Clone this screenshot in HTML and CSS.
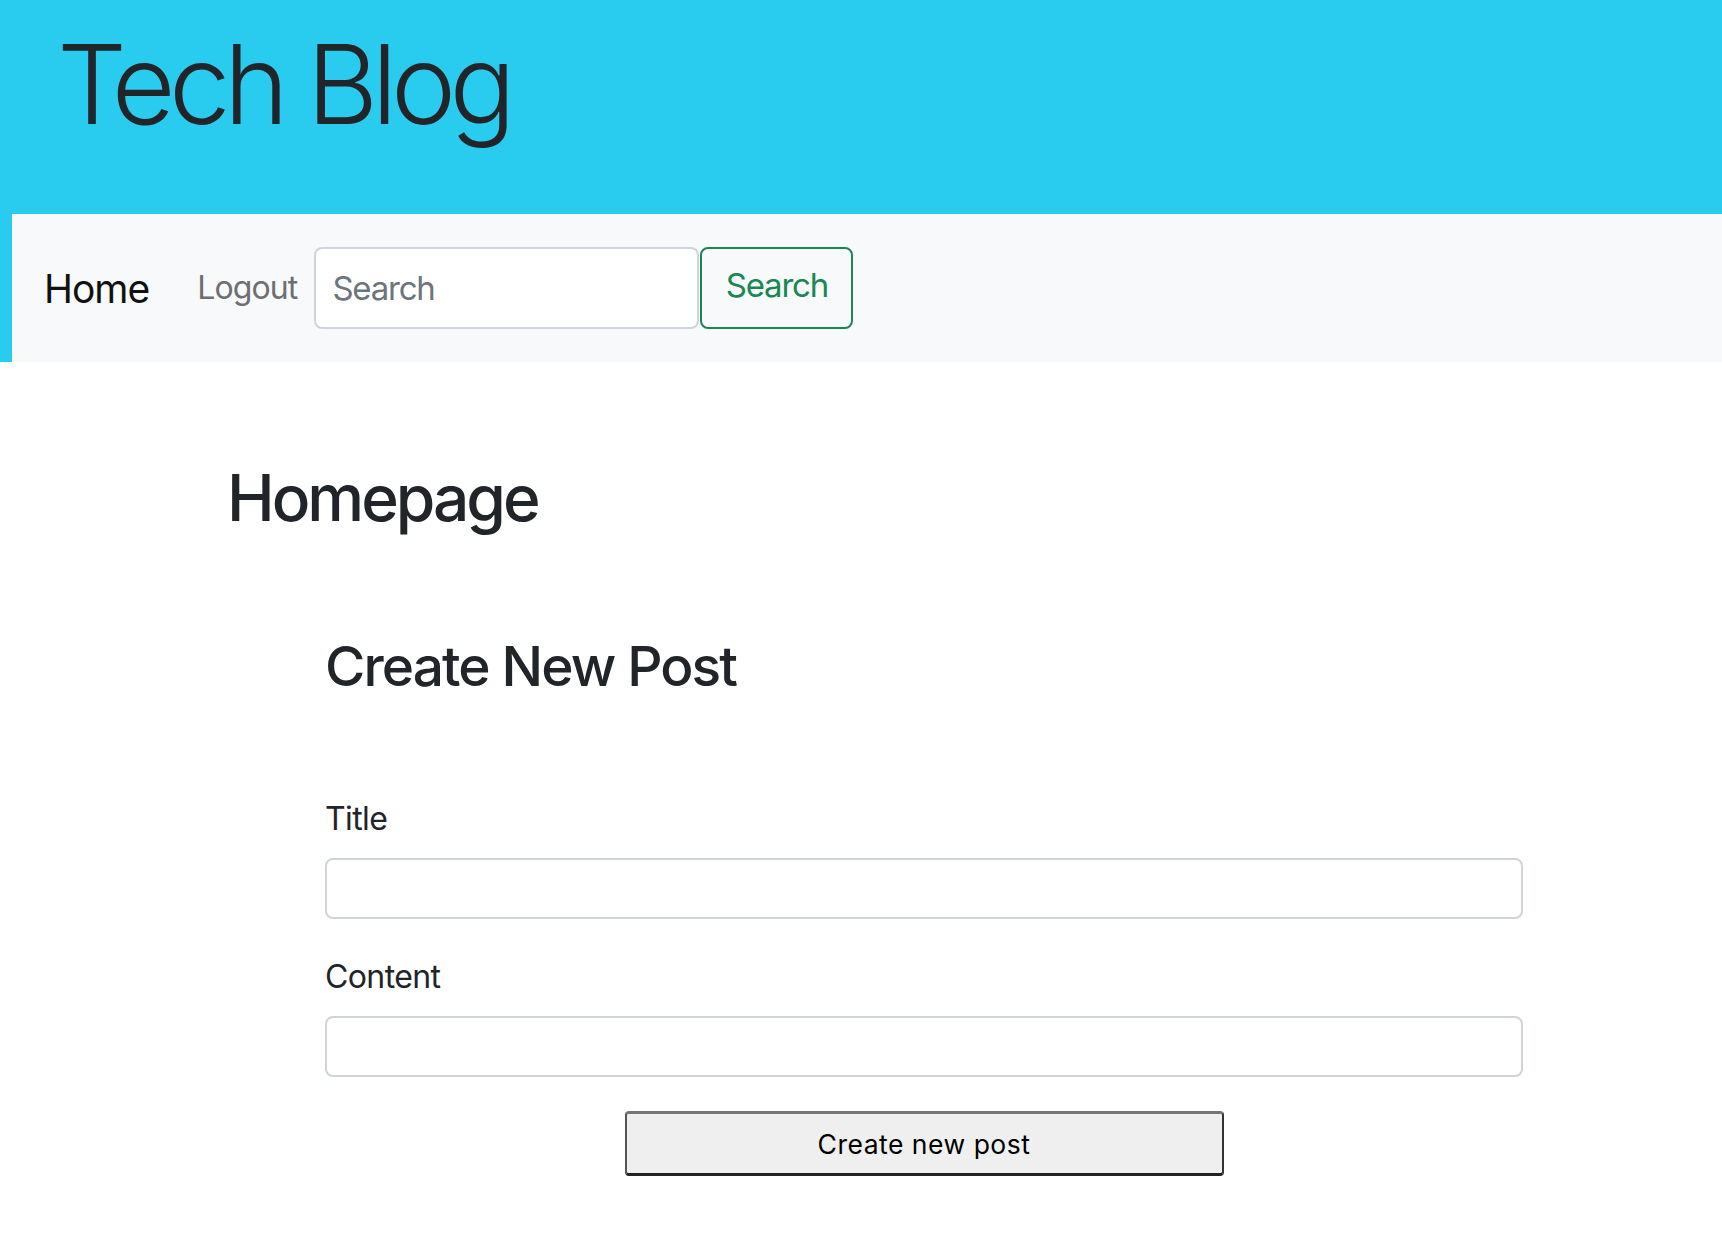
FILE: index.html
```html
<!DOCTYPE html>
<html lang="en">
<head>
<meta charset="utf-8">
<title>Tech Blog</title>
<link rel="stylesheet" href="styles.css">
</head>
<body>
<header class="site-header">
  <h1 class="brand-title">Tech Blog</h1>
  <nav class="navbar">
    <a class="nav-brand" href="#">Home</a>
    <a class="nav-link" href="#">Logout</a>
    <form class="search-form">
      <input class="search-input" type="search" placeholder="Search">
      <button class="search-btn" type="button">Search</button>
    </form>
  </nav>
</header>
<main class="main">
  <h1 class="page-title">Homepage</h1>
  <section class="post-form">
    <h2 class="form-title">Create New Post</h2>
    <label class="field-label" for="title">Title</label>
    <input class="field-input" id="title" type="text">
    <label class="field-label field-label-second" for="content">Content</label>
    <input class="field-input" id="content" type="text">
    <div class="submit-row">
      <button class="submit-btn" type="button">Create new post</button>
    </div>
  </section>
</main>
</body>
</html>
```

FILE: styles.css
```css
* { box-sizing: border-box; }

body {
  margin: 0;
  font-family: Inter, "Liberation Sans", sans-serif;
  color: #212529;
  background: #fff;
}

.site-header {
  background: #29cbef;
  padding-left: 12px;
}

.brand-title {
  margin: 0;
  height: 214px;
  padding: 29px 0 0 45px;
  font-size: 110px;
  line-height: 1;
  font-weight: 300;
  letter-spacing: -6.5px;
  color: #212529;
}

.navbar {
  height: 148px;
  background: #f8f9fa;
  display: flex;
  align-items: center;
  padding-left: 32px;
}

.nav-brand {
  font-size: 39px;
  line-height: 1;
  color: #111;
  text-decoration: none;
  letter-spacing: -1px;
  margin-right: 48px;
}

.nav-link {
  font-size: 32px;
  line-height: 1;
  color: #6e6f70;
  text-decoration: none;
  letter-spacing: -0.9px;
  margin-right: 17px;
}

.search-form {
  display: flex;
  margin: 0;
}

.search-input {
  width: 385px;
  height: 82px;
  border: 2px solid #ced4da;
  border-radius: 8px;
  background: #fff;
  padding: 0 0 0 16px;
  font-family: inherit;
  font-size: 33px;
  color: #212529;
  outline: none;
  -webkit-appearance: none;
  appearance: none;
}

.search-input::placeholder {
  color: #6c757d;
  letter-spacing: -1.2px;
}

.search-btn {
  width: 153px;
  height: 82px;
  border: 2px solid #198754;
  border-radius: 8px;
  background: transparent;
  color: #198754;
  font-family: inherit;
  font-size: 33px;
  letter-spacing: -1.2px;
  padding: 0 0 6px 0;
  margin-left: 1px;
}

.main {
  padding: 104px 0 40px 227px;
}

.page-title {
  margin: 0;
  font-size: 64px;
  line-height: 64px;
  font-weight: 500;
  letter-spacing: -3px;
}

.post-form {
  margin: 109px 0 0 98px;
  width: 1198px;
}

.form-title {
  margin: 0 0 109px 0;
  font-size: 55px;
  line-height: 55px;
  font-weight: 500;
  letter-spacing: -1.9px;
}

.field-label {
  display: block;
  font-size: 32px;
  line-height: 32px;
  margin-bottom: 23px;
  letter-spacing: -0.6px;
}

.field-label-second {
  margin-top: 42px;
}

.field-input {
  display: block;
  width: 100%;
  height: 61px;
  border: 2px solid #ced4da;
  border-radius: 8px;
  background: #fff;
  font-family: inherit;
  font-size: 32px;
  padding: 0 16px;
  outline: none;
}

.submit-row {
  display: flex;
  justify-content: center;
  margin-top: 34px;
}

.submit-btn {
  width: 50%;
  height: 65px;
  background: #efefef;
  border-style: solid;
  border-width: 3px 2px 3px 2px;
  border-color: #767676 #333 #222 #555;
  border-radius: 4px;
  font-family: inherit;
  font-size: 26.5px;
  color: #000;
  letter-spacing: 0.5px;
  padding: 0;
}
```
